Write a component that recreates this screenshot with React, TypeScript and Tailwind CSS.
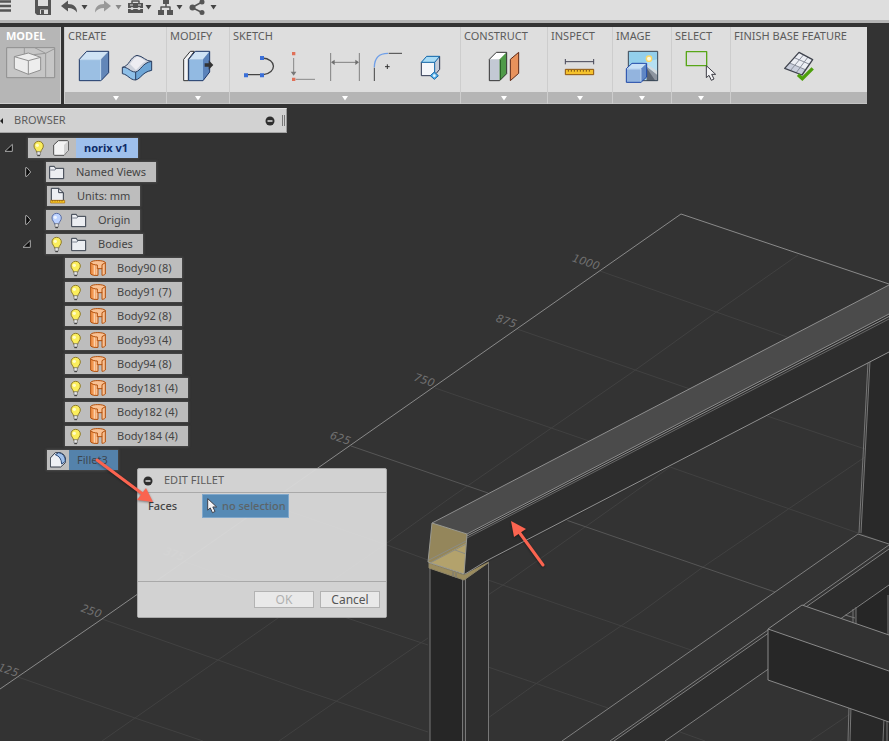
import type { ReactNode } from "react"
import clsx from "clsx"

type IconProps = {
  box: string
  className?: string
  children: ReactNode
}

const Icon = ({ box, className = "h-[34px] w-[34px]", children }: IconProps): JSX.Element => (
  <svg
    viewBox={box}
    className={clsx("block shrink-0", className)}
    fill="none"
    strokeLinejoin="round"
    aria-hidden="true">
    {children}
  </svg>
)

/* ---------- Quick access bar ---------- */

const Caret = ({ className = "text-[#444]" }: { className?: string }): JSX.Element => (
  <svg viewBox="0 0 7 18" className={clsx("h-[18px] w-[7px]", className)} aria-hidden="true">
    <path d="M0.5 5h6L3.5 9.5z" fill="currentColor" />
  </svg>
)

const QuickBar = (): JSX.Element => (
  <header className="relative flex h-[23px] items-start border-b-[3px] border-[#b5b5b5] bg-[#dedede] text-[#555]">
    <button type="button" aria-label="Menu" className="w-[11px]">
      <Icon box="0 0 11 18" className="h-[18px] w-[11px]">
        <path d="M0 1.500h11M0 6h11M0 10.500h11" stroke="currentColor" strokeWidth="2.500" />
      </Icon>
    </button>
    <button type="button" aria-label="Save" className="ml-6">
      <Icon box="0 0 16 18" className="h-[18px] w-4">
        <path d="M0 0h16v15H2l-2-2z" fill="currentColor" />
        <path d="M3 0h10v6H3zM5 9.500h8V14H5z" fill="#dedede" />
        <path d="M6 10h3v4H6z" fill="currentColor" />
      </Icon>
    </button>
    <button type="button" aria-label="Undo" className="ml-[10px] flex items-center gap-[3px]">
      <Icon box="0 0 17 18" className="h-[18px] w-[17px]">
        <path d="M0 6l7-5.500v3.500c6 0 9 3 9 8.500-2-3-4.500-4.500-9-4.500v3.500z" fill="currentColor" />
      </Icon>
      <Caret />
    </button>
    <button type="button" aria-label="Redo" className="ml-[6px] flex items-center gap-1">
      <Icon box="0 0 17 18" className="h-[18px] w-[17px] text-[#999]">
        <path d="M17 6L10 .5V4C4 4 1 7 1 12.500 3 9.500 5.500 8 10 8v3.500z" fill="currentColor" />
      </Icon>
      <Caret className="text-[#888]" />
    </button>
    <button type="button" aria-label="Toolbox" className="ml-[5px] flex items-center gap-px">
      <Icon box="0 0 17 18" className="h-[18px] w-[17px]">
        <path d="M5 3V1h7v2" stroke="currentColor" strokeWidth="1.500" />
        <path d="M1 3h15v5H1zM1 9h15v4H1z" fill="currentColor" />
        <path d="M0 8.500h17M3 5h3M11 5h3" stroke="#dedede" />
        <circle cx="5" cy="8.500" r="1.500" fill="#dedede" />
        <circle cx="12" cy="8.500" r="1.500" fill="#dedede" />
      </Icon>
      <Caret />
    </button>
    <button type="button" aria-label="Data panel" className="ml-[6px] flex items-center gap-[2px]">
      <Icon box="0 0 16 18" className="h-[18px] w-4">
        <path d="M5 0h6v4H5zM0 10h6v5H0zM9 10h6v5H9z" fill="currentColor" />
        <path d="M8 4v3M3 10V7h9v3" stroke="currentColor" strokeWidth="1.500" />
      </Icon>
      <Caret />
    </button>
    <button type="button" aria-label="Share" className="ml-[6px] flex items-center gap-[5px]">
      <Icon box="0 0 16 18" className="h-[18px] w-4">
        <path d="M13 2L3 7.500l10 5" stroke="currentColor" strokeWidth="1.500" />
        <circle cx="13" cy="2" r="2.500" fill="currentColor" />
        <circle cx="3.500" cy="7.500" r="3" fill="currentColor" />
        <circle cx="13" cy="12.500" r="2.500" fill="currentColor" />
      </Icon>
      <Caret />
    </button>
  </header>
)

/* ---------- Ribbon ---------- */

const BoxIcon = () => (
  <Icon box="231 147 102 102">
    <path d="M238 178l22-24h66l-23 24z" fill="#cfe3f5" />
    <path d="M238 178h65v64h-65z" fill="#9bbfe3" />
    <path d="M303 178l23-24v64l-23 24z" fill="#6286b8" />
    <path d="M238 178l22-24h66v64l-23 24h-65z" stroke="#1d3766" strokeWidth="3" />
    <path d="M240 179h62v62" stroke="#cfe3f5" strokeWidth="2" />
  </Icon>
)

const LoftIcon = () => (
  <Icon box="360 147 102 102">
    <path d="M367 203v18c15 3 22 19 40 19 16-4 20-24 48-28v-28z" fill="#8fc0e8" />
    <path d="M407 216v24c16-4 20-24 48-28v-28c-30 4-32 28-48 32z" fill="#6ea6d6" />
    <path d="M367 202c22-4 22-30 44-36 18 2 26 18 44 18-28 4-32 28-48 32-18 0-22-16-40-14z" fill="#cdd2dc" />
    <path d="M390 192c10-12 14-22 26-22l22 14c-14 6-20 18-30 26z" fill="#ededf2" />
    <path
      d="M367 202c22-4 22-30 44-36 18 2 26 18 44 18v27c-28 5-32 25-48 29-18 0-22-16-40-19zM367 202c18-2 22 14 40 14 16-4 20-28 48-32M407 216v24"
      stroke="#2b3e60"
      strokeWidth="3"
    />
  </Icon>
)

const PressPullIcon = () => (
  <Icon box="543 147 102 102">
    <path d="M551 178l20-24h12l-18 24v64h-14z" fill="#f2f4f7" stroke="#333" strokeWidth="3" />
    <path d="M566 178l20-24h43l-20 24z" fill="#cfe3f5" />
    <path d="M566 178h43v64h-43z" fill="#92bae2" />
    <path d="M609 178l20-24v62l-20 26z" fill="#5b83ba" />
    <path d="M566 178l20-24h43v62l-20 26h-43z" stroke="#1d3766" strokeWidth="3" />
    <path d="M614 190h12v-9l14 14-14 14v-9h-12z" fill="#333" />
  </Icon>
)

const SplineIcon = () => (
  <Icon box="51 147 102 102">
    <path d="M63 224h52c40-4 42-48-4-50" stroke="#444" strokeWidth="4" />
    <path d="M57 220h12v12H57zM105 220h12v12h-12zM105 168h12v12h-12z" fill="#3a6fd8" />
  </Icon>
)

const ConstraintIcon = () => (
  <Icon box="180 147 102 102">
    <path d="M206 174v44M212 238h58" stroke="#888" strokeWidth="3" />
    <path d="M197 215h17l-8 12z" fill="#777" />
    <path d="M201 156h10v10h-10zM201 233h10v10h-10z" fill="#e07058" />
  </Icon>
)

const DimensionIcon = () => (
  <Icon box="309 147 102 102">
    <path d="M317 159v84M403 159v84M322 187h76" stroke="#808080" strokeWidth="3" />
    <path d="M318 187l11-8v16zM402 187l-11-8v16z" fill="#6e6e6e" />
  </Icon>
)

const ArcIcon = () => (
  <Icon box="438 147 102 102">
    <path d="M448 243v-40M491 160h40" stroke="#444" strokeWidth="3" />
    <path d="M448 202c0-28 14-42 41-42" stroke="#6f9fe8" strokeWidth="4" />
    <path d="M487 193v14M480 200h14" stroke="#333" strokeWidth="3" />
  </Icon>
)

const SketchCubeIcon = () => (
  <Icon box="567 147 102 102">
    <path d="M589 187l16-18h39l-15 18z" fill="#a9dbf5" />
    <path d="M589 187h40v40h-40z" fill="#f4f6fa" />
    <path d="M629 187l15-18v39l-15 19z" fill="#c4cbd8" />
    <path d="M589 187v40h40M644 169v39l-10 12" stroke="#2c3550" strokeWidth="3" />
    <path d="M589 187l16-18h39l-15 18zM629 187v32" stroke="#0d63a8" strokeWidth="3" />
    <path d="M628 216l12 11-12 11-12-11z" fill="#5fb4ea" stroke="#0d63a8" strokeWidth="3" />
    <circle cx="628" cy="227" r="4" fill="#e8f6ff" />
  </Icon>
)

const PlaneIcon = () => (
  <Icon box="96 147 102 102">
    <path d="M103 178l21-21h31l-21 21z" fill="#fff" />
    <path d="M103 178h31v64h-31z" fill="#c3c9d4" />
    <path d="M134 178l21-21v64l-21 21z" fill="#4f9a48" />
    <path d="M103 178l21-21h31v64l-21 21h-31z" stroke="#333" strokeWidth="3" />
    <path d="M136 180v60" stroke="#23591f" strokeWidth="3" />
    <path d="M166 178l25-21v63l-25 22z" fill="#e8925c" stroke="#5e2a18" strokeWidth="3" />
  </Icon>
)

const MeasureIcon = () => (
  <Icon box="324 147 102 102">
    <path d="M331 177v16M416 177v16M331 185h85" stroke="#445" strokeWidth="3" />
    <path d="M331 208h85v16h-85z" fill="#f5c22c" stroke="#8c5410" strokeWidth="3" />
    <path d="M340 210v5M349 210v5M358 210v5M367 210v5M376 210v5M385 210v5M394 210v5M403 210v5" stroke="#7a5010" strokeWidth="3" />
  </Icon>
)

const RenderIcon = () => (
  <Icon box="510 147 102 102">
    <path d="M520 154h88v88h-88z" fill="#b5e0f2" />
    <path d="M522 156h84v22l-84 20z" fill="#93cfec" />
    <path d="M575 200l33 24v18h-33z" fill="#8d949f" />
    <path d="M575 204v38h26z" fill="#5c6470" />
    <path d="M575 198l33 28v-12l-33-22z" fill="#d5dade" />
    <path d="M520 154h88v88h-88z" stroke="#354454" strokeWidth="3" />
    <circle cx="582" cy="176" r="8" fill="#fffbe0" stroke="#fbd868" strokeWidth="4" />
    <path d="M514 206l17-16h44l-17 16z" fill="#c9e0f6" />
    <path d="M514 206h44v41h-44z" fill="#93b4de" />
    <path d="M558 206l17-16v41l-17 16z" fill="#5f86c4" />
    <path d="M514 206l17-16h44v41l-17 16h-44z" stroke="#1c46a8" strokeWidth="3" />
    <path d="M516 207h42v38" stroke="#d8e8fa" strokeWidth="2" />
  </Icon>
)

const cursorPath = "M0 0v36l8-7 7 15 8-4-7-14h12z"

const SelectIcon = () => (
  <Icon box="72 147 102 102">
    <path d="M79 155h61v42H79z" stroke="#58a618" strokeWidth="4" />
    <g transform="translate(139 197)">
      <path d={cursorPath} fill="#f4f4f6" stroke="#3c3c44" strokeWidth="3" />
    </g>
  </Icon>
)

const FinishIcon = () => (
  <Icon box="363 147 102 102">
    <path d="M414 157l41 22-32 46-52-20z" fill="#eceef4" />
    <path d="M386 189l47 20-10 16-52-20z" fill="#c9cedc" />
    <path d="M400 173l46 20M386 189l47 20M428 164l-40 48M441 171l-36 48" stroke="#8b909c" strokeWidth="3" />
    <path d="M414 157l41 22-32 46-52-20z" stroke="#3f434d" strokeWidth="4" />
    <path d="M411 224l13 12 31-31" stroke="#4da00c" strokeWidth="10" strokeLinejoin="miter" />
  </Icon>
)

type Section = {
  title: string
  width: string
  icons: { name: string; icon: ReactNode }[]
  hasMenu: boolean
}

const sections: Section[] = [
  {
    title: "CREATE",
    width: "w-[102px]",
    hasMenu: true,
    icons: [
      { name: "Box", icon: <BoxIcon /> },
      { name: "Loft", icon: <LoftIcon /> },
    ],
  },
  {
    title: "MODIFY",
    width: "w-[63px]",
    hasMenu: true,
    icons: [{ name: "Press Pull", icon: <PressPullIcon /> }],
  },
  {
    title: "SKETCH",
    width: "w-[231px]",
    hasMenu: true,
    icons: [
      { name: "Spline", icon: <SplineIcon /> },
      { name: "Constraint", icon: <ConstraintIcon /> },
      { name: "Dimension", icon: <DimensionIcon /> },
      { name: "Arc", icon: <ArcIcon /> },
      { name: "Project", icon: <SketchCubeIcon /> },
    ],
  },
  {
    title: "CONSTRUCT",
    width: "w-[87px]",
    hasMenu: true,
    icons: [{ name: "Offset Plane", icon: <PlaneIcon /> }],
  },
  {
    title: "INSPECT",
    width: "w-[65px]",
    hasMenu: true,
    icons: [{ name: "Measure", icon: <MeasureIcon /> }],
  },
  {
    title: "IMAGE",
    width: "w-[59px]",
    hasMenu: true,
    icons: [{ name: "Render", icon: <RenderIcon /> }],
  },
  {
    title: "SELECT",
    width: "w-[59px]",
    hasMenu: true,
    icons: [{ name: "Select", icon: <SelectIcon /> }],
  },
  {
    title: "FINISH BASE FEATURE",
    width: "w-[137px]",
    hasMenu: false,
    icons: [{ name: "Finish", icon: <FinishIcon /> }],
  },
]

const Ribbon = (): JSX.Element => (
  <nav className="relative mt-1 flex gap-[3px]">
    <button
      type="button"
      className="flex h-[77px] w-[61px] flex-col items-start border-r border-b border-[#cfcfcf] bg-[#b6b6b6] pt-px text-left">
      <span className="pl-[6px] font-bold leading-4 text-white">MODEL</span>
      <span className="mt-[2px] pl-[5px]">
        <Icon box="15 138 153 99" className="h-[33px] w-[51px]">
          <path d="M20 143h144v90H20z" fill="#c6c6c6" stroke="#8f8f8f" strokeWidth="3" />
          <path d="M73 143v24l64-7v72M104 143l33 17 27-14" stroke="#999" strokeWidth="3" />
          <path d="M43 170l42-11 37 13v38l-37 13-42-17z" fill="#ededed" stroke="#909090" strokeWidth="3" />
          <path d="M43 170l42 12 37-10M85 182v41" stroke="#909090" strokeWidth="3" />
        </Icon>
      </span>
    </button>
    <div className="flex">
      {sections.map(({ title, width, icons, hasMenu }) => (
        <section
          key={title}
          className={clsx("flex h-[77px] flex-col border-l border-[#cdcdcd] bg-[#dedede] pt-px", width)}>
          <h2 className="pl-[3px] leading-4 whitespace-nowrap">{title}</h2>
          <div className="mt-[5px] flex justify-center gap-[9px]">
            {icons.map(({ name, icon }) => (
              <button key={name} type="button" aria-label={name}>
                {icon}
              </button>
            ))}
          </div>
          <div className="mt-auto flex h-3 items-center justify-center border-b border-[#c4c4c4] bg-[#b5b5b5] pt-[2px]">
            {hasMenu && (
              <button type="button" aria-label={`${title} menu`}>
                <svg viewBox="0 0 6 5" className="block h-[5px] w-[6px]">
                  <path d="M0 0h6L3 4.500z" fill="#fff" />
                </svg>
              </button>
            )}
          </div>
        </section>
      ))}
    </div>
  </nav>
)

/* ---------- Browser tree ---------- */

const slot = "h-5 w-4"

const Bulb = ({ isOn }: { isOn: boolean }): JSX.Element => (
  <Icon box="98 24 36 60" className="h-5 w-3">
    <path
      d="M115 34c-9 0-14 7-14 14 0 8 7 11 8 19h12c1-8 8-11 8-19 0-7-5-14-14-14z"
      fill={isOn ? "#fbee5c" : "#bcd2ff"}
      stroke={isOn ? "#8e7a2a" : "#5a6ea4"}
      strokeWidth="3"
    />
    <circle cx="111" cy="46" r="5" fill={isOn ? "#fffcc8" : "#eef4ff"} />
    <path d="M110 65h10v10h-10z" fill="#e8e8e8" stroke="#666" strokeWidth="2" />
    <path d="M111 77h8" stroke="#333" strokeWidth="3" />
  </Icon>
)

const Folder = () => (
  <Icon box="147 96 48 60" className={slot}>
    <path d="M149 109h14l3 6h25v31h-42z" fill="#eceef2" stroke="#333b48" strokeWidth="3" />
    <path d="M151 120h14l3-4" stroke="#4c5666" strokeWidth="2" />
  </Icon>
)

const Component = () => (
  <Icon box="162 24 48 60" className={slot}>
    <path d="M164 45l14-13h27q3 0 3 3v26l-13 15h-28q-3 0-3-3z" fill="#f3f3f3" stroke="#4d4d4d" strokeWidth="3" />
    <path d="M195 45l12-12v29l-12 13z" fill="#d2d2d2" />
  </Icon>
)

const UnitsDoc = () => (
  <Icon box="150 168 48 60" className={slot}>
    <path d="M154 175h22l14 13v24h-36z" fill="#eef0f4" stroke="#333b48" strokeWidth="3" />
    <path d="M176 175v13h14" stroke="#333b48" strokeWidth="3" />
    <path d="M152 211h42v8h-42z" fill="#fbc927" stroke="#a86608" strokeWidth="2" />
    <path d="M158 211v4M165 211v4M172 211v4M179 211v4M186 211v4" stroke="#7a4a08" strokeWidth="2" />
  </Icon>
)

const Body = () => (
  <Icon box="270 384 48 60" className={slot}>
    <path d="M272 397c4-7 38-7 44 0v35c-3 3-7 4-10 4v-20h-12v20c-8 1-18 0-22-4z" fill="#f9c193" />
    <path d="M273 400l15 5v31c-6 0-12-1-15-4z" fill="#f2964e" />
    <path d="M281 404h5v31h-5z" fill="#fbd0aa" />
    <path
      d="M272 397c4-7 38-7 44 0v35c-3 3-7 4-10 4v-20h-12v20c-8 1-18 0-22-4zM272 398c4 5 12 7 20 7v12M306 417v-13l10-6"
      stroke="#b1500c"
      strokeWidth="3"
    />
  </Icon>
)

const FilletMark = () => (
  <Icon box="150 450 48 60" className={slot}>
    <path d="M151 474l15-16h14q16 4 17 22v7l-15 14h-31z" fill="#eef0f4" stroke="#333b48" strokeWidth="3" />
    <path d="M166 464l10-6q20 4 20 26l-11 8q-1-22-19-28z" fill="#9fc0ea" stroke="#2c4a78" strokeWidth="3" />
  </Icon>
)

type Node = {
  label: string
  indent: string
  icons: ReactNode[]
  expander?: "open" | "closed"
  kind?: "root" | "active"
}

const body = (label: string): Node => ({
  label,
  indent: "pl-[40px]",
  icons: [<Bulb isOn />, <Body />],
})

const nodes: Node[] = [
  { label: "norix v1", indent: "pl-[3px]", icons: [<Bulb isOn />, <Component />], expander: "open", kind: "root" },
  { label: "Named Views", indent: "pl-[21px]", icons: [<Folder />], expander: "closed" },
  { label: "Units: mm", indent: "pl-[22px]", icons: [<UnitsDoc />] },
  { label: "Origin", indent: "pl-[21px]", icons: [<Bulb isOn={false} />, <Folder />], expander: "closed" },
  { label: "Bodies", indent: "pl-[21px]", icons: [<Bulb isOn />, <Folder />], expander: "open" },
  body("Body90 (8)"),
  body("Body91 (7)"),
  body("Body92 (8)"),
  body("Body93 (4)"),
  body("Body94 (8)"),
  body("Body181 (4)"),
  body("Body182 (4)"),
  body("Body184 (4)"),
  { label: "Fillet3", indent: "pl-[22px]", icons: [<FilletMark />], kind: "active" },
]

const Minus = () => (
  <svg viewBox="0 0 10 10" className="block h-[10px] w-[10px]" aria-hidden="true">
    <circle cx="5" cy="5" r="4.500" fill="#2e2e2e" />
    <path d="M2.500 5h5" stroke="#ddd" strokeWidth="1.500" />
  </svg>
)

const Browser = (): JSX.Element => (
  <aside className="relative mt-1 w-[287px]">
    <div className="flex h-[25px] items-center border border-l-0 border-t-[#e4e4e4] border-r-[#999] border-b-[#a4a4a4] bg-[#d2d2d2]">
      <button type="button" aria-label="Collapse browser" className="w-[14px]">
        <svg viewBox="0 0 3 6" className="h-[6px] w-[3px]">
          <path d="M3 0v6L0 3z" fill="#222" />
        </svg>
      </button>
      <h2 className="flex-1">BROWSER</h2>
      <button type="button" aria-label="Minimize browser">
        <Minus />
      </button>
      <span className="mr-px ml-[7px] h-[11px] w-[3px] border-x border-[#777]" />
    </div>
    <ul className="mt-[5px] flex flex-col gap-1 text-[#444]">
      {nodes.map(({ label, indent, icons, expander, kind }) => (
        <li key={label} className={clsx("flex h-5", indent)}>
          <div className="w-[25px]">
            {expander && (
              <button type="button" aria-label={`Toggle ${label}`} className="block">
                {expander === "open" ? (
                  <Icon box="9 24 36 60" className="h-5 w-3">
                    <path d="M37 43v21H15z" fill="#0c0c0c" stroke="#aaa" strokeWidth="3" />
                  </Icon>
                ) : (
                  <Icon box="63 96 36 60" className="h-5 w-3">
                    <path d="M77 113v26h4l11-13-11-13z" fill="#0c0c0c" stroke="#aaa" strokeWidth="3" />
                  </Icon>
                )}
              </button>
            )}
          </div>
          <div className="flex bg-[#bdbdbd] shadow-[0_0_2px_1px_#4a4a4a]">
            {icons.map((icon, i) => (
              <span key={i} className="flex w-[22px] justify-center">
                {icon}
              </span>
            ))}
            <button
              type="button"
              className={clsx(
                "pr-[10px] pl-2 leading-5 whitespace-nowrap",
                kind === "root" && "ml-1 bg-[#9fc0ec] font-bold text-[#0d2a66]",
                kind === "active" && "bg-[#5482ab] text-[#3c4650]"
              )}>
              {label}
            </button>
          </div>
        </li>
      ))}
    </ul>
  </aside>
)

/* ---------- Dialog ---------- */

const EditFillet = (): JSX.Element => (
  <div
    role="dialog"
    aria-labelledby="edit-fillet-title"
    className="absolute top-[468px] left-[137px] w-[250px] rounded-xs border border-[#a9a9a9] bg-[#d8d8d8]/97">
    <div className="flex h-6 items-center gap-[11px] border-b border-[#a9a9a9] pl-[5px]">
      <button type="button" aria-label="Collapse">
        <Minus />
      </button>
      <h2 id="edit-fillet-title">EDIT FILLET</h2>
    </div>
    <div className="flex h-[88px] items-start pt-px pl-[10px]">
      <span id="faces-label" className="w-[54px] leading-6 font-medium text-[#444]">
        Faces
      </span>
      <button
        type="button"
        aria-labelledby="faces-label"
        className="flex h-6 items-center gap-1 border border-[#7fa7cb] bg-[#568ab5] pr-[2px] pl-1 font-medium text-[#5c6468]">
        <Icon box="-2 -2 34 50" className="h-4 w-[11px]">
          <path d={cursorPath} fill="#f4f4f6" stroke="#3c3c44" strokeWidth="3" />
        </Icon>
        no selection
      </button>
    </div>
    <div className="flex justify-end gap-[6px] border-t border-[#a9a9a9] bg-[#d2d2d2] px-[6px] pt-[9px] pb-[9px] text-[12px]">
      <button
        type="button"
        disabled
        className="h-[17px] w-[60px] border border-[#b3b3b3] bg-[#e9e9e9] leading-[15px] text-[#b0b0b0]">
        OK
      </button>
      <button
        type="button"
        className="h-[17px] w-[60px] border border-[#b3b3b3] bg-[#e9e9e9] leading-[15px] text-[#555]">
        Cancel
      </button>
    </div>
  </div>
)

/* ---------- 3D viewport ---------- */

const rulerMarks = [
  { value: "1000", x: 598, y: 270 },
  { value: "875", x: 515, y: 328 },
  { value: "750", x: 433, y: 387 },
  { value: "625", x: 349, y: 445 },
  { value: "375", x: 183, y: 561 },
  { value: "250", x: 100, y: 618 },
  { value: "125", x: 17, y: 677 },
]

const Viewport = (): JSX.Element => (
  <svg
    viewBox="0 0 889 741"
    preserveAspectRatio="xMinYMin slice"
    className="absolute inset-0 h-full w-full"
    fill="none"
    aria-hidden="true">
    {/* minor grid */}
    <path
      d="M600 271L787 337M517 329L690 389M435 388L589 441M268 504L387 545 428 560M185 562L347 618 428 645M102 619L218 660 300 689 428 732M18 677L135 718 203 741M767 416L865 449M670 467L858 533M488 580L691 650M488 667L608 708M680 732L705 741M798 255L715 313 634 371 550 429 450 498 387 543 278 618 218 660 102 741M865 457L703 567 640 613 537 683 488 718M670 467L503 585 488 595M428 638L400 657 279 741M850 714L810 741"
      stroke="#414141"
    />
    <path d="M351 446L488 493M566 520L650 549 775 592" stroke="#565656" />
    <path d="M0 689L102 619 681 214 889 284" stroke="#8a8a8a" />
    <g fontFamily="DejaVu Sans, sans-serif" fontStyle="italic" fontWeight="200" fontSize="11" fill="#707070" textAnchor="end">
      {rulerMarks.map(({ value, x, y }) => (
        <text key={value} transform={`translate(${x} ${y}) rotate(19)`}>
          {value}
        </text>
      ))}
    </g>

    {/* rear post */}
    <path d="M870 361L861 533 889 544V340z" fill="#292929" />
    <path d="M870 361L861 533M868 362L859 533" stroke="#777" />

    {/* lower rail */}
    <path d="M858 534L889 545 610 741H562z" fill="#333" />
    <path d="M889 549V585L665 741H614z" fill="#2d2d2d" />
    <path d="M856 607l33-22v54l-33-12z" fill="#262626" />
    <path d="M889 544L858 534 562 741M889 545L610 741M889 549L614 741M889 585L665 741" stroke="#808080" />
    <path d="M856 607v18M853 609v15M845 615l10 3M888 595v40" stroke="#777" />

    {/* cross member */}
    <path d="M850 706L849 741H889V718z" fill="#282828" />
    <path d="M851 706L850 741M849 706L848 741M884 718L883 741M887 719v22" stroke="#777" />
    <path d="M768 629L802 605 889 635V671z" fill="#323232" />
    <path d="M768 629L889 671V722L768 680z" fill="#272727" />
    <path d="M889 635L802 605 768 629 889 671M768 629V680L889 722" stroke="#8a8a8a" />

    {/* front post */}
    <path d="M430 566H463V741H430z" fill="#262626" />
    <path d="M465 575L488 560V741H465z" fill="#2e2e2e" />
    <path d="M430 566V741M462.500 578V741M465.500 578V741M488.500 560V741" stroke="#777" />
    <path d="M429 563L464 575 488 560V563L464 580 429 568z" fill="#9b8c5e" stroke="#8f8668" />
    <path d="M453 572v5M456 573v5" stroke="#777" />

    {/* upper rail */}
    <path d="M432 523L889 285V314L467 534z" fill="#4b4b4b" />
    <path d="M467 534L889 314V352L465 574z" fill="#2d2d2d" />
    <path d="M432 523L889 285M467 534L889 314M467 536L889 316.500" stroke="#8e8e8e" />
    <path d="M467 538L889 319" stroke="#666" />
    <path d="M465 574L488 560 889 352" stroke="#909090" />
    <path d="M432 523L467 534 464 574 428 562z" fill="#94865b" />
    <path d="M430 563L466 543 464 574z" fill="#b3a26c" />
    <path d="M429 560L466 541M430 563L466 544M455 550l11 4" stroke="#8c8c84" />
    <path d="M432 523L467 534 464 574 428 562z" stroke="#9a9a92" />
  </svg>
)

const Annotations = (): JSX.Element => (
  <svg
    viewBox="0 0 889 741"
    preserveAspectRatio="xMinYMin slice"
    className="pointer-events-none absolute inset-0 h-full w-full drop-shadow-[0_1px_1px_#0006]"
    aria-hidden="true">
    <g stroke="#fb6450" strokeWidth="3" strokeLinecap="round">
      <path d="M97 460L144 495" />
      <path d="M543 565L519 532" />
    </g>
    <path d="M153 502L146 488 137 500z" fill="#fb6450" />
    <path d="M511 521L514 537 526 529z" fill="#fb6450" />
  </svg>
)

const App = (): JSX.Element => (
  <main className="relative min-h-screen overflow-hidden bg-[#333] font-['Noto_Sans','Open_Sans',sans-serif] text-[11px] text-[#5c5c5c]">
    <Viewport />
    <QuickBar />
    <Ribbon />
    <Browser />
    <EditFillet />
    <Annotations />
  </main>
)

export default App
